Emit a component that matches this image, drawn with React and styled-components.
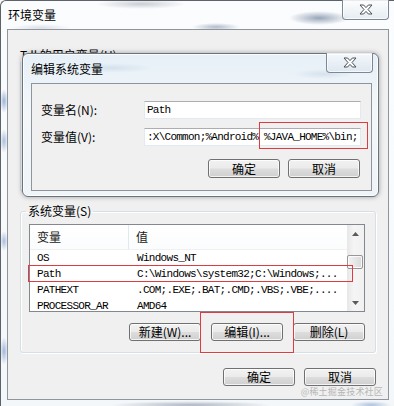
import styled, { createGlobalStyle } from "styled-components";

const GlobalStyle = createGlobalStyle`
  html, body {
    margin: 0;
    padding: 0;
    background: #fff;
  }
  body {
    font-family: "Noto Sans CJK SC", "Liberation Sans", sans-serif;
    font-size: 12px;
    color: #000;
  }
  * {
    box-sizing: border-box;
  }
`;

const systemRows = [
  { name: "OS", value: "Windows_NT" },
  { name: "Path", value: "C:\\Windows\\system32;C:\\Windows;..." },
  { name: "PATHEXT", value: ".COM;.EXE;.BAT;.CMD;.VBS;.VBE;...." },
  { name: "PROCESSOR_AR", value: "AMD64" },
];

const CloseGlyph = () => (
  <svg width="14" height="11" viewBox="0 0 14 11">
    <path
      d="M1 1 H4.6 L7 3.6 L9.4 1 H13 L9 5.5 L13 10 H9.4 L7 7.4 L4.6 10 H1 L5 5.5 Z"
      fill="#fff"
      stroke="#4a4f57"
      strokeWidth="1"
      strokeLinejoin="round"
    />
  </svg>
);

const Arrow = ({ down }) => (
  <svg width="7" height="4" viewBox="0 0 7 4">
    <path d={down ? "M0 0 H7 L3.5 4 Z" : "M0 4 H7 L3.5 0 Z"} fill="#5a5a5a" />
  </svg>
);

const App = () => {
  return (
    <Screen>
      <GlobalStyle />
      <OuterWindow>
        <TitleBar>
          <Title>环境变量</Title>
          <CloseButton>
            <CloseGlyph />
          </CloseButton>
        </TitleBar>
        <Client>
          <UserGroup>
            <Legend>Tdl 的用户变量(U)</Legend>
          </UserGroup>
          <SysGroup>
            <Legend>系统变量(S)</Legend>
            <ListView>
              <ListBody>
                <HeaderRow>
                  <HeaderCell>变量</HeaderCell>
                  <HeaderCell>值</HeaderCell>
                </HeaderRow>
                {systemRows.map((row) => (
                  <Row key={row.name}>
                    <Cell>{row.name}</Cell>
                    <Cell>{row.value}</Cell>
                  </Row>
                ))}
              </ListBody>
              <Scrollbar>
                <ArrowBox>
                  <Arrow />
                </ArrowBox>
                <Track>
                  <Thumb />
                </Track>
                <ArrowBox>
                  <Arrow down />
                </ArrowBox>
              </Scrollbar>
            </ListView>
            <ButtonRow $top={11}>
              <Button>新建(W)...</Button>
              <Button>编辑(I)...</Button>
              <Button>删除(L)</Button>
            </ButtonRow>
          </SysGroup>
          <ButtonRow $top={15} $gap={9} $right={12}>
            <Button>确定</Button>
            <Button>取消</Button>
          </ButtonRow>
        </Client>
      </OuterWindow>

      <EditDialog>
        <DialogTitleBar>
          <DialogTitle>编辑系统变量</DialogTitle>
          <CloseButton>
            <CloseGlyph />
          </CloseButton>
        </DialogTitleBar>
        <DialogClient>
          <Form>
            <FieldLabel>变量名(N):</FieldLabel>
            <TextBox>Path</TextBox>
            <FieldLabel>变量值(V):</FieldLabel>
            <TextBox>:X\Common;%Android% %JAVA_HOME%\bin;</TextBox>
          </Form>
          <ButtonRow $top={13} $gap={8} $right={11}>
            <Button $h={19}>确定</Button>
            <Button $h={19}>取消</Button>
          </ButtonRow>
        </DialogClient>
      </EditDialog>

      <Marker $x={259} $y={122} $w={109} $h={27} />
      <Marker $x={28} $y={265} $w={325} $h={17} />
      <Marker $x={200} $y={312} $w={94} $h={41} />
      <Watermark>@稀土掘金技术社区</Watermark>
    </Screen>
  );
};

const Screen = styled.div`
  position: relative;
  width: 394px;
  height: 406px;
  overflow: hidden;
  background: #f7f9fb;
`;

const OuterWindow = styled.div`
  width: 394px;
  height: 406px;
  display: flex;
  flex-direction: column;
  padding: 0 5px 6px 6px;
  border-left: 1px solid #5d6168;
  border-top: 1px solid #5d6168;
  border-top-left-radius: 6px;
  background:
    radial-gradient(30px 7px at 318px 17px, rgba(70, 95, 130, 0.55), transparent),
    radial-gradient(45px 5px at 140px 3px, rgba(110, 120, 140, 0.35), transparent),
    radial-gradient(24px 4px at 215px 26px, rgba(90, 110, 140, 0.45), transparent),
    radial-gradient(30px 4px at 40px 27px, rgba(120, 140, 170, 0.25), transparent),
    radial-gradient(4px 12px at 3px 100px, rgba(90, 130, 190, 0.6), transparent),
    radial-gradient(4px 12px at 3px 140px, rgba(90, 130, 190, 0.5), transparent),
    radial-gradient(4px 10px at 3px 240px, rgba(90, 130, 190, 0.5), transparent),
    radial-gradient(4px 14px at 3px 350px, rgba(90, 130, 190, 0.55), transparent),
    radial-gradient(80px 4px at 190px 404px, rgba(90, 105, 130, 0.45), transparent),
    radial-gradient(20px 4px at 370px 404px, rgba(90, 130, 190, 0.45), transparent),
    linear-gradient(#fbfcfd, #f4f7fa);
`;

const TitleBar = styled.div`
  height: 28px;
  display: flex;
  align-items: flex-start;
  justify-content: space-between;
  padding-left: 1px;
`;

const Title = styled.span`
  margin-top: 7px;
  font-size: 12px;
  line-height: 14px;
  color: #000;
`;

const CloseButton = styled.div`
  width: 47px;
  height: 20px;
  margin-top: -1px;
  display: flex;
  align-items: center;
  justify-content: center;
  border: 1px solid #7d8795;
  border-top: none;
  border-radius: 0 0 4px 4px;
  background: linear-gradient(rgba(255, 255, 255, 0.55), rgba(214, 224, 234, 0.55));
  box-shadow: inset 0 0 0 1px rgba(255, 255, 255, 0.7);
`;

const Client = styled.div`
  flex: 1;
  display: flex;
  flex-direction: column;
  background: #f0f0f0;
  border: 1px solid #8e959c;
  padding: 18px 0 0 12px;
`;

const GroupBox = styled.fieldset`
  width: 356px;
  margin: 0;
  border: 1px solid #d5dfe5;
  border-radius: 3px;
  box-shadow: inset 1px 1px 0 #fff, 1px 1px 0 #fff;
  min-inline-size: 0;
`;

const UserGroup = styled(GroupBox)`
  height: 144px;
  padding: 0;
`;

const SysGroup = styled(GroupBox)`
  margin-top: 12px;
  padding: 6px 10px 11px 8px;
`;

const Legend = styled.legend`
  margin-left: -3px;
  padding: 0 2px;
  font-size: 12px;
  line-height: 14px;
  color: #000;
`;

const ListView = styled.div`
  height: 88px;
  display: flex;
  border: 1px solid #828790;
  background: #fff;
`;

const ListBody = styled.div`
  flex: 1;
  overflow: hidden;
`;

const HeaderRow = styled.div`
  height: 25px;
  display: grid;
  grid-template-columns: 99px 1fr;
  background: linear-gradient(#ffffff, #fbfcfd);
  border-bottom: 1px solid #f0f0f0;
`;

const HeaderCell = styled.div`
  display: flex;
  align-items: center;
  padding-left: 7px;
  font-size: 12px;
  line-height: 14px;
  color: #1a1a1a;
  &:first-child {
    border-right: 1px solid #e3e8ee;
  }
`;

const Row = styled.div`
  height: 16px;
  display: grid;
  grid-template-columns: 99px 1fr;
`;

const Cell = styled.div`
  padding-left: 7px;
  font-family: "Liberation Mono", "DejaVu Sans Mono", monospace;
  font-size: 11px;
  letter-spacing: -0.7px;
  line-height: 16px;
  white-space: nowrap;
  color: #000;
  &:last-child {
    padding-left: 8px;
  }
`;

const Scrollbar = styled.div`
  width: 17px;
  display: flex;
  flex-direction: column;
  background: linear-gradient(90deg, #e7e7e7, #f5f5f5 40%, #f1f1f1);
`;

const ArrowBox = styled.div`
  height: 17px;
  display: flex;
  align-items: center;
  justify-content: center;
`;

const Track = styled.div`
  flex: 1;
  padding: 13px 1px 0 0;
`;

const Thumb = styled.div`
  height: 14px;
  border: 1px solid #979797;
  border-radius: 2px;
  background: linear-gradient(90deg, #f3f3f3, #e6e6e6 50%, #d9d9d9);
  box-shadow: inset 0 0 0 1px rgba(255, 255, 255, 0.8);
`;

const ButtonRow = styled.div`
  display: flex;
  justify-content: flex-end;
  gap: ${(p) => p.$gap ?? 10}px;
  margin-top: ${(p) => p.$top}px;
  padding-right: ${(p) => p.$right ?? 0}px;
`;

const Button = styled.div`
  width: 72px;
  height: ${(p) => p.$h ?? 18}px;
  display: flex;
  align-items: center;
  justify-content: center;
  border: 1px solid #707070;
  border-radius: 3px;
  background: linear-gradient(#f2f2f2 0%, #ebebeb 48%, #dddddd 52%, #cfcfcf 100%);
  box-shadow: inset 0 0 0 1px rgba(255, 255, 255, 0.75);
  font-size: 12px;
  line-height: 14px;
  color: #000;
  white-space: nowrap;
`;

const EditDialog = styled.div`
  position: absolute;
  left: 22px;
  top: 53px;
  width: 357px;
  height: 144px;
  display: flex;
  flex-direction: column;
  padding: 0 6px 5px 8px;
  border: 1px solid #6a737e;
  border-radius: 6px;
  background:
    radial-gradient(40px 5px at 90px 14px, rgba(150, 175, 200, 0.25), transparent),
    radial-gradient(30px 5px at 300px 20px, rgba(150, 175, 200, 0.25), transparent),
    linear-gradient(#e6f0f7, #f3f7fa 40%, #eef4f8);
  box-shadow: 0 0 5px rgba(0, 0, 0, 0.35), inset 0 0 0 1px rgba(255, 255, 255, 0.8);
`;

const DialogTitleBar = styled.div`
  height: 29px;
  display: flex;
  align-items: flex-start;
  justify-content: space-between;
  margin-right: -1px;
`;

const DialogTitle = styled.span`
  margin-top: 8px;
  font-size: 12px;
  line-height: 14px;
  color: #000;
`;

const DialogClient = styled.div`
  flex: 1;
  display: flex;
  flex-direction: column;
  background: #f0f0f0;
  border: 1px solid #8e959c;
  padding: 17px 0 0 9px;
`;

const Form = styled.div`
  display: grid;
  grid-template-columns: 103px 217px;
  row-gap: 9px;
  align-items: center;
`;

const FieldLabel = styled.span`
  font-size: 12px;
  line-height: 14px;
  color: #000;
`;

const TextBox = styled.div`
  height: 18px;
  padding-left: 2px;
  overflow: hidden;
  border: 1px solid #e3e9ef;
  border-top-color: #abadb3;
  background: #fff;
  font-family: "Liberation Mono", "DejaVu Sans Mono", monospace;
  font-size: 11px;
  letter-spacing: -0.75px;
  line-height: 16px;
  white-space: pre;
  color: #000;
`;

const Marker = styled.div`
  position: absolute;
  left: ${(p) => p.$x}px;
  top: ${(p) => p.$y}px;
  width: ${(p) => p.$w}px;
  height: ${(p) => p.$h}px;
  border: 1px solid #dc3c42;
  pointer-events: none;
`;

const Watermark = styled.div`
  position: absolute;
  right: 11px;
  bottom: 9px;
  font-size: 9px;
  line-height: 10px;
  color: rgba(170, 170, 170, 0.85);
  letter-spacing: 0.2px;
`;

export default App;
